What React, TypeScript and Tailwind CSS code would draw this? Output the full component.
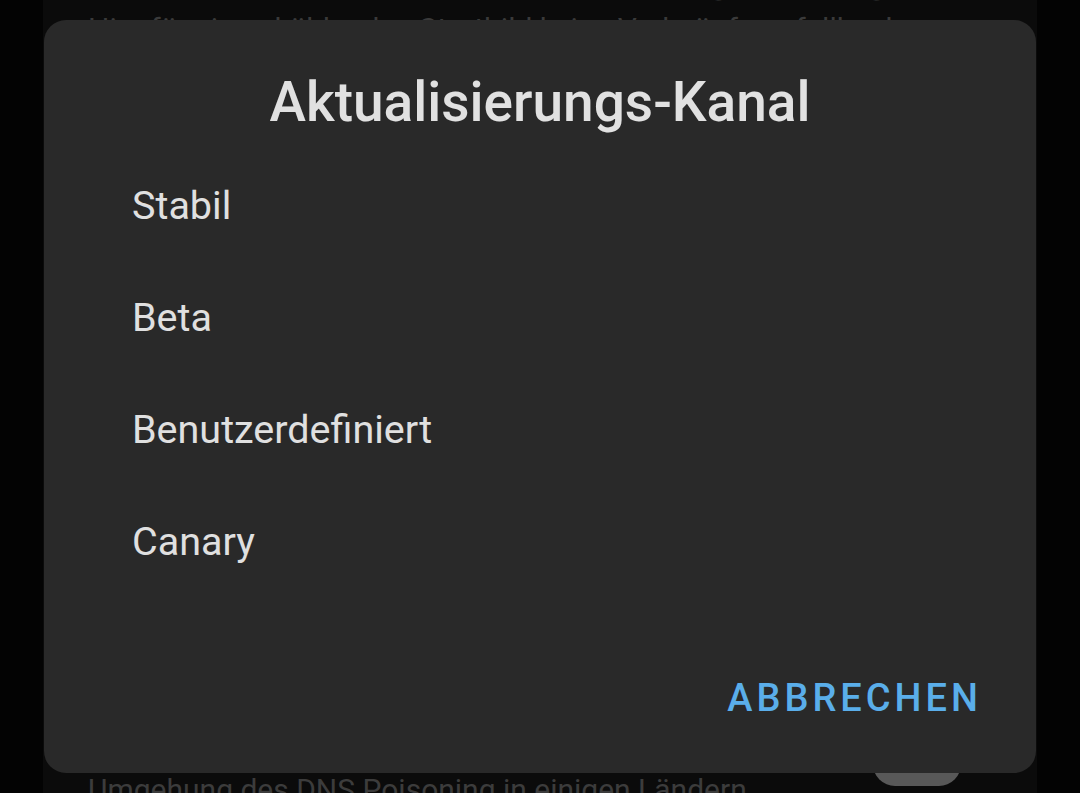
import React from 'react';

const channels = ['Stabil', 'Beta', 'Benutzerdefiniert', 'Canary'];

/** Dimmed settings page that sits behind the dialog. */
function SettingsBackdrop(): React.ReactElement {
  return (
    <div className="mx-[43px] h-[793px] overflow-hidden bg-[#0b0b0b]">
      <div className="-mt-[50px] whitespace-nowrap pl-[45px] text-[48px] leading-[48px] text-[#3e3e3e]">
        Startbild per App-Verknüpfung festlegen
      </div>
      <p className="mt-[9px] whitespace-nowrap pl-[45px] text-[30px] leading-[44px] text-[#3a3a3a]">
        Hier für einen kühlenden Startbild keine Verknüpfung fallback
      </p>
      <div className="mt-[647px] flex items-start justify-between pl-[45px] pr-[76px]">
        <p className="mt-[77px] whitespace-nowrap text-[30px] leading-[30px] text-[#3c3c3c]">
          Umgehung des DNS Poisoning in einigen Ländern
        </p>
        <div className="h-[88px] w-[88px] shrink-0 rounded-[22px] bg-[#585858]" />
      </div>
    </div>
  );
}

export default function App(): React.ReactElement {
  return (
    <div
      className="relative h-[793px] w-[1080px] overflow-hidden bg-[#030303]"
      style={{ fontFamily: 'Roboto, "Noto Sans", sans-serif' }}
    >
      <SettingsBackdrop />

      {/* Dialog */}
      <div
        role="dialog"
        aria-labelledby="channel-title"
        className="absolute left-[44px] top-[20px] flex h-[753px] w-[992px] flex-col rounded-[22px] bg-[#292929] pt-[54px] pb-[56px]"
      >
        <h2
          id="channel-title"
          className="text-center text-[55px] font-medium leading-[56px] text-[#e1e1e1]"
        >
          Aktualisierungs-Kanal
        </h2>

        <ul className="mt-[20px]">
          {channels.map((c) => (
            <li key={c} className="pl-[88px] text-[39.5px] leading-[112px] text-[#e0e0e0]">
              {c}
            </li>
          ))}
        </ul>

        <div className="mt-auto flex justify-end pr-[54px]">
          <button className="text-[38px] font-medium leading-[38px] tracking-[4px] text-[#5aaeea]">
            ABBRECHEN
          </button>
        </div>
      </div>
    </div>
  );
}
